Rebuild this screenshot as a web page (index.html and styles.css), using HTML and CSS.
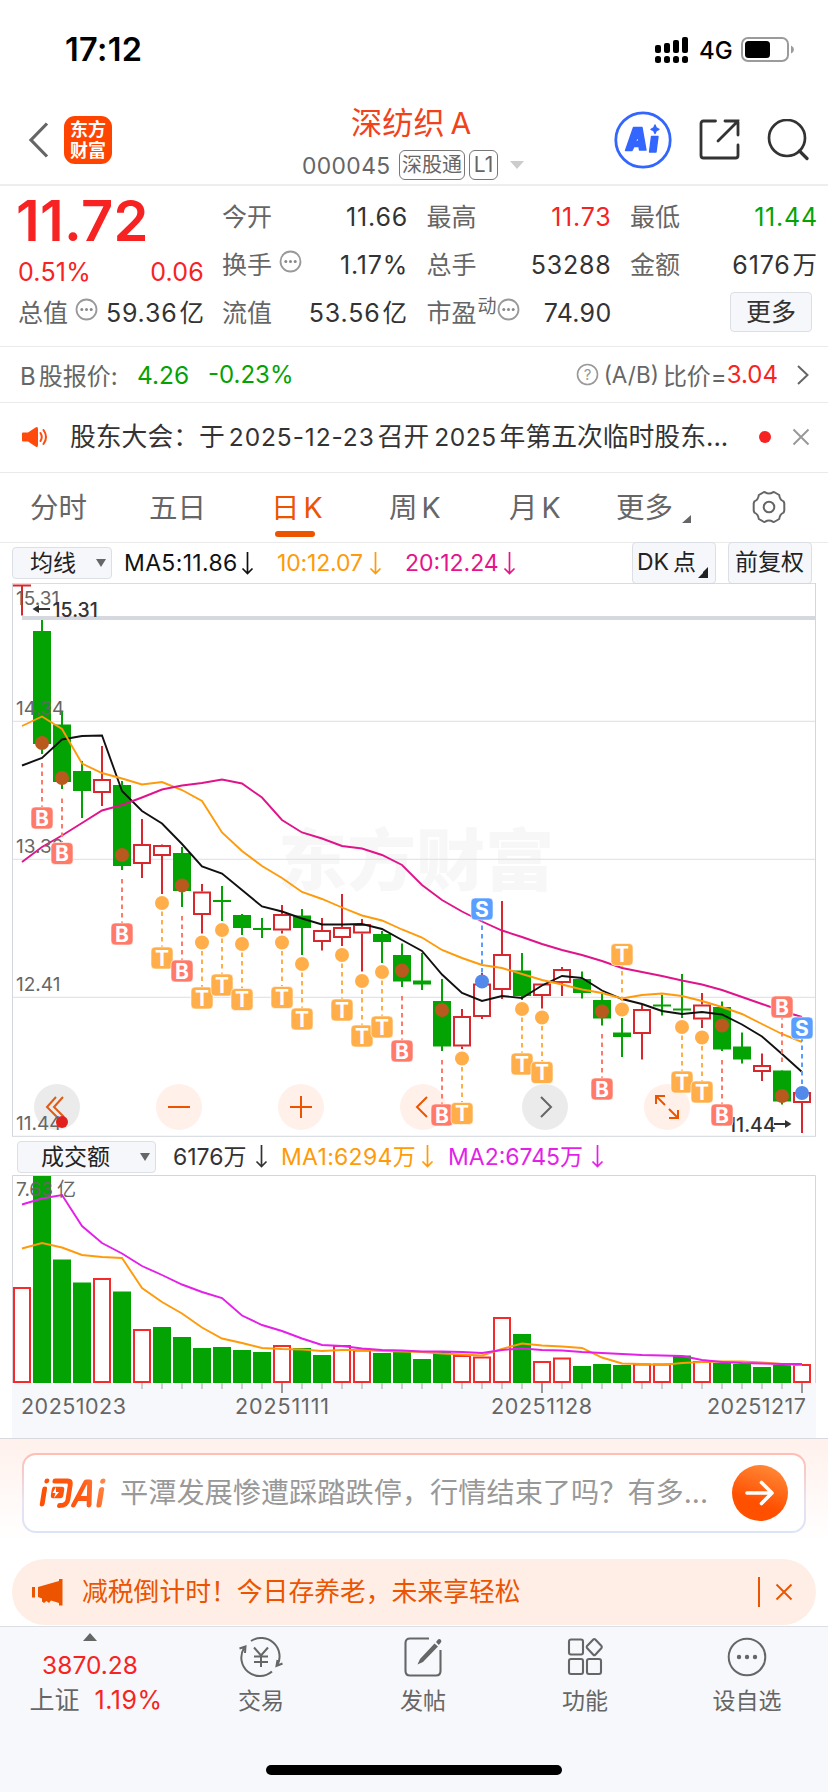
FILE: index.html
```html
<!DOCTYPE html>
<html lang="zh-CN">
<head>
<meta charset="utf-8">
<title>深纺织A 000045</title>
<link rel="stylesheet" href="styles.css">
</head>
<body>
<div class="screen">
  <div class="status">
    <span class="clock">17:12</span>
    <svg class="signal" width="34" height="28" viewBox="0 0 34 28"><g><rect x="0" y="8" width="6" height="8" rx="2"/><rect x="9" y="6" width="6" height="10" rx="2"/><rect x="18" y="3" width="6" height="13" rx="2"/><rect x="27" y="0" width="6" height="16" rx="2"/><rect x="0" y="19" width="6" height="7" rx="2.5"/><rect x="9" y="19" width="6" height="7" rx="2.5"/><rect x="18" y="19" width="6" height="7" rx="2.5"/><rect x="27" y="19" width="6" height="7" rx="2.5"/></g></svg>
    <span class="net">4G</span>
    <svg class="battery" width="54" height="26" viewBox="0 0 54 26"><rect x="1" y="1" width="46" height="23" rx="6" fill="none" stroke="#9b9b9b" stroke-width="2"/><rect x="4" y="4" width="25" height="17" rx="3.5"/><path d="M50 8.500Q53 10 53 12.500T50 16.500Z" fill="#9b9b9b"/></svg>
  </div>

  <header class="header">
    <svg class="back" width="22" height="38" viewBox="0 0 22 38"><path d="M19 2.500L3 19L19 35.500" fill="none" stroke="#666" stroke-width="3.200"/></svg>
    <div class="logo"><span>东方</span><span>财富</span></div>
    <div class="title">
      <div class="name">深纺织<span class="name-a">A</span></div>
      <div class="code"><span class="num">000045</span><span class="tag tag-a">深股通</span><span class="tag tag-b">L1</span><i class="caret"></i></div>
    </div>
    <div class="actions">
      <svg width="58" height="58" viewBox="0 0 58 58"><circle cx="29" cy="29" r="27.200" fill="none" stroke="#36f" stroke-width="2.800"/><g fill="#36f" stroke="#36f" stroke-width="1.400" stroke-linejoin="round"><path fill-rule="evenodd" d="M19.500 16.500H28L32 39H25.500L25 35.500H20L18 39.500H11.500ZM21.500 30.500H24.500L24 24Z"/><path d="M37.500 25.500H44L42 41H35.500Z"/><path d="M41 14L42.300 17L45 18.300L42.300 19.600L41 22.500L39.700 19.600L37 18.300L39.700 17Z"/></g></svg>
      <svg class="share" width="42" height="42" viewBox="0 0 42 42"><path d="M16.500 2H4.500Q2 2 2 4.500V36.500Q2 39 4.500 39H36.500Q39 39 39 36.500V26M26 2H39V16M39 2L19 22" fill="none" stroke="#333" stroke-width="2.800" stroke-linecap="round"/></svg>
      <svg class="search" width="42" height="42" viewBox="0 0 42 42"><circle cx="20" cy="19" r="18" fill="none" stroke="#333" stroke-width="2.700"/><path d="M32.500 32L40 39.500" stroke="#333" stroke-width="3.200" stroke-linecap="round"/></svg>
    </div>
  </header>

  <section class="quote">
    <div class="price">
      <div class="last">11.72</div>
      <div class="cell red chg"><b>0.51%</b><b>0.06</b></div>
      <div class="cell cap"><span class="lbl">总值</span><svg class="more" width="23" height="23" viewBox="0 0 23 23"><use href="#dots"/></svg><b>59.36<em>亿</em></b></div>
    </div>
    <div class="stats">
      <div class="cell"><span class="lbl">今开</span><b>11.66</b></div>
      <div class="cell"><span class="lbl">最高</span><b class="red">11.73</b></div>
      <div class="cell"><span class="lbl">最低</span><b class="green">11.44</b></div>
      <div class="cell"><span class="lbl">换手</span><svg class="more" width="23" height="23" viewBox="0 0 23 23"><g id="dots"><circle cx="11.500" cy="11.500" r="10" fill="none" stroke="#999" stroke-width="1.800"/><g fill="#888"><circle cx="6.800" cy="11.500" r="1.500"/><circle cx="11.500" cy="11.500" r="1.500"/><circle cx="16.200" cy="11.500" r="1.500"/></g></g></svg><b>1.17%</b></div>
      <div class="cell"><span class="lbl">总手</span><b>53288</b></div>
      <div class="cell"><span class="lbl">金额</span><b>6176<em>万</em></b></div>
      <div class="cell"><span class="lbl">流值</span><b>53.56<em>亿</em></b></div>
      <div class="cell"><span class="lbl">市盈</span><span class="sup">动</span><svg class="more tight" width="23" height="23" viewBox="0 0 23 23"><use href="#dots"/></svg><b class="pe">74.90</b></div>
      <div class="cell"><button class="btn-more">更多</button></div>
    </div>
  </section>

  <section class="bshare">
    <span class="lbl">B<em>股报价:</em></span><span class="green b-price">4.26</span><span class="green b-chg">-0.23%</span>
    <span class="ratio"><svg width="23" height="23" viewBox="0 0 23 23"><circle cx="11.500" cy="11.500" r="10" fill="none" stroke="#999" stroke-width="1.600"/><text x="11.500" y="17" font-size="15" text-anchor="middle" fill="#999">?</text></svg><span class="ab">(A/B)</span><em>比价=</em><span class="red">3.04</span><svg class="chev" width="14" height="20" viewBox="0 0 14 20"><path d="M2 1L11.500 10L2 19" fill="none" stroke="#666" stroke-width="2"/></svg></span>
  </section>

  <section class="news">
    <svg class="speaker" width="27" height="22" viewBox="0 0 27 22"><path d="M1 6.500H6L13.500 1.500Q16 0 16 3V19Q16 22 13.500 20.500L6 15.500H1Q0 15.500 0 14.500V7.500Q0 6.500 1 6.500Z" fill="#ff4a0b"/><path d="M18.500 7Q21 11 18.500 15M21.500 4Q26.500 11 21.500 18" fill="none" stroke="#ff4a0b" stroke-width="2" stroke-linecap="round"/></svg>
    <span class="news-text">股东大会：于<span class="n1">2025-12-23</span>召开<span class="n2">2025</span>年第五次临时股东...</span>
    <i class="dot"></i>
    <svg class="x" width="18" height="18" viewBox="0 0 18 18"><path d="M1.500 1.500L16.500 16.500M16.500 1.500L1.500 16.500" stroke="#999" stroke-width="2"/></svg>
  </section>

  <nav class="tabs">
    <span>分时</span><span>五日</span><span class="on">日<i>K</i></span><span>周<i>K</i></span><span>月<i>K</i></span><span class="tab-more">更多<svg width="9" height="8" viewBox="0 0 9 8"><path d="M9 0V8H0Z" fill="#666"/></svg></span>
    <svg class="gear" width="34" height="34" viewBox="0 0 34 34"><path d="M13.200 2.300Q17 4.800 20.800 2.300L22 2L27.200 5Q27.700 9.800 31.600 11.400L32.300 13.400V20.600L31.600 22.600Q27.700 24.200 27.200 29L22 32L20.800 31.700Q17 29.200 13.200 31.700L12 32L6.800 29Q6.300 24.200 2.400 22.600L1.700 20.600V13.400L2.400 11.400Q6.300 9.800 6.800 5L12 2Z" fill="none" stroke="#666" stroke-width="2" stroke-linejoin="round"/><circle cx="17" cy="17" r="5.300" fill="none" stroke="#666" stroke-width="2"/></svg>
  </nav>

  <div class="indbar">
    <span class="select sel-ma">均线<i class="tri"></i></span>
    <span class="ma black m5">MA5:11.86</span><svg class="down black" width="13" height="23"><use href="#arrow"/></svg>
    <span class="ma orange m10">10:12.07</span><svg class="down orange" width="13" height="23"><use href="#arrow"/></svg>
    <span class="ma pink m20">20:12.24</span><svg class="down pink" width="13" height="23"><use href="#arrow"/></svg>
    <span class="flat dk">DK<em>点</em><i class="corner"></i></span><span class="flat fq">前复权</span>
    <svg width="0" height="0"><g id="arrow"><path d="M6.500 0V21.500M1.500 16.500L6.500 21.500L11.500 16.500" fill="none" stroke="currentColor" stroke-width="1.700"/></g></svg>
  </div>
  <svg class="chart" id="kline" width="828" height="555" viewBox="0 583 828 555"></svg>

  <div class="indbar volbar">
    <span class="select sel-vol">成交额<i class="tri"></i></span>
    <span class="ma dark v0">6176万</span><svg class="down dark" width="13" height="23"><use href="#arrow"/></svg>
    <span class="ma orange v1">MA1:6294万</span><svg class="down orange" width="13" height="23"><use href="#arrow"/></svg>
    <span class="ma violet v2">MA2:6745万</span><svg class="down violet" width="13" height="23"><use href="#arrow"/></svg>
  </div>
  <svg class="chart" id="volume" width="828" height="263" viewBox="0 1175 828 263"></svg>

  <section class="ask">
    <div class="ask-box"><div class="ask-in">
      <svg class="ask-logo" width="68" height="32" viewBox="0 0 68 32"><defs><linearGradient id="lg" gradientUnits="userSpaceOnUse" x1="0" y1="32" x2="66" y2="0"><stop offset="0" stop-color="#ff4d00"/><stop offset=".6" stop-color="#ff5a14"/><stop offset="1" stop-color="#ff9355"/></linearGradient></defs><g transform="translate(5 0) skewX(-9)" fill="none" stroke="url(#lg)" stroke-width="4.800" stroke-linecap="round" stroke-linejoin="round"><path d="M2.500 12V27M3.500 4V4.100M11.500 4H24Q27.500 4 27.500 8V23Q27.500 28.500 20 28.500"/><path d="M11 10.500H19.500Q21.500 10.500 21.500 13V18Q21.500 20.500 19.500 20.500H12.500Q10.500 20.500 10.500 18V13Q10.500 10.500 12 10.500Z" fill="url(#lg)" stroke-width="1.500"/><path d="M34 28L42.500 5H46.500L49.500 28M38 21.500H48"/><path d="M59.500 12.500V28M59.500 4V4.100" stroke-width="5.200"/></g><path d="M17 10L13.500 16H16.500L15 21L20 15H17Z" fill="#fff"/></svg>
      <span class="ask-text">平潭发展惨遭踩踏跌停，行情结束了吗？有多...</span>
      <span class="go"><svg width="30" height="26" viewBox="0 0 30 26"><path d="M2 13H27M16.500 2.500L27 13L16.500 23.500" fill="none" stroke="#fff" stroke-width="3.600" stroke-linecap="round" stroke-linejoin="round"/></svg></span>
    </div></div>
  </section>

  <section class="promo">
    <svg width="31" height="27" viewBox="0 0 31 27"><path d="M0 8H3V18.500H0ZM6 8L27 2V0H30.500V26.500H27V24L19 21.500L17 24L14.500 22L12 24L10 22.500V19.500L6 18Z" fill="#ec5400"/></svg>
    <span class="promo-text">减税倒计时！今日存养老，未来享轻松</span>
    <i class="bar"></i>
    <svg class="px" width="18" height="18" viewBox="0 0 18 18"><path d="M1.500 1.500L16.500 16.500M16.500 1.500L1.500 16.500" stroke="#ec5400" stroke-width="1.900"/></svg>
  </section>

  <footer class="dock">
    <div class="index">
      <svg width="14" height="8" viewBox="0 0 14 8"><path d="M7 0L14 8H0Z" fill="#666"/></svg>
      <div class="red idx">3870.28</div>
      <div class="idx2"><span>上证</span><span class="red pct">1.19%</span></div>
    </div>
    <div class="item"><svg width="46" height="42" viewBox="0 0 46 42"><g fill="none" stroke="#666" stroke-width="2"><path d="M13 5A18.500 18.500 0 0 1 39.500 29M34 35.500A18.500 18.500 0 0 1 6 12M1.500 12.500L7.500 10.500L7 17M44.500 27.500L38.500 30L39.500 24M16 11.500L23 19.500L30 11.500M23 19.500V31M16 20.500H30M16 26H30"/></g></svg><span>交易</span></div>
    <div class="item"><svg width="46" height="42" viewBox="0 0 46 42"><path d="M29 2.500H10Q5.500 2.500 5.500 7V35Q5.500 39.500 10 39.500H36Q40.500 39.500 40.500 35V14" fill="none" stroke="#666" stroke-width="2.100"/><path d="M34.500 7.500L38 10.500L23 26L17.500 28.500L20 23ZM36 6L38 3.500Q39.500 2.500 41 4Q42 5.500 40.500 7L38.800 9Z" fill="#666"/></svg><span>发帖</span></div>
    <div class="item"><svg width="46" height="42" viewBox="0 0 46 42"><g fill="none" stroke="#666" stroke-width="2.100" stroke-linejoin="round"><rect x="7" y="3.500" width="14" height="15" rx="2"/><rect x="7" y="23" width="14" height="15" rx="2"/><rect x="25" y="23" width="14" height="15" rx="2"/><path d="M31.300 3.500Q32.300 2.500 33.300 3.500L39.500 10Q40.200 11 39.500 12L33.300 18.700Q32.300 19.700 31.300 18.700L25 12Q24.300 11 25 10Z"/></g></svg><span>功能</span></div>
    <div class="item"><svg width="46" height="42" viewBox="0 0 46 42"><circle cx="23" cy="21" r="18.300" fill="none" stroke="#666" stroke-width="2"/><g fill="#666"><circle cx="15" cy="21" r="2.200"/><circle cx="23" cy="21" r="2.200"/><circle cx="31" cy="21" r="2.200"/></g></svg><span>设自选</span></div>
  </footer>
  <div class="home"><i></i></div>
</div>
<script src="chart.js"></script>
</body>
</html>
```

FILE: styles.css
```css
* { box-sizing: border-box; }
body { margin: 0; background: #fff; font-family: Inter, "Noto Sans CJK SC", sans-serif; color: #333; }
i, em { font-style: normal; }
b { font-weight: 400; }
svg { display: block; flex: none; }
.screen { width: 828px; height: 1792px; overflow: hidden; display: flex; flex-direction: column; }
.screen > * { flex: none; }
.red { color: #f72323; }
.green { color: #04a304; }
.black { color: #111; }
.dark { color: #333; }
.orange { color: #ff9a0a; }
.pink { color: #e4148a; }
.violet { color: #e31fe8; }

.status { height: 89px; display: flex; align-items: flex-start; color: #000; padding-left: 65px; }
.clock { width: 590px; margin-top: 30px; font-size: 32.500px; line-height: 40px; font-weight: 600; letter-spacing: 0.300px; }
.signal { margin-top: 37px; }
.net { width: 52px; padding-left: 10px; margin-top: 36px; font-size: 24px; line-height: 30px; font-weight: 500; }
.battery { margin-top: 37px; }

.header { height: 97px; border-bottom: 2px solid #eee; display: flex; align-items: flex-start; padding-left: 28px; }
.back { margin-top: 32px; }
.logo { width: 48px; height: 48px; margin: 27px 0 0 14px; border-radius: 11px; background: #ff4400; color: #fff; font-size: 18px; font-weight: 700; display: flex; flex-direction: column; align-items: center; justify-content: center; }
.logo span { line-height: 21px; }
.title { width: 240px; margin-left: 178px; margin-top: 11px; }
.name { height: 46px; padding-left: 61px; font-size: 31.200px; line-height: 46px; color: #f2421b; white-space: nowrap; }
.name-a { margin-left: 6px; font-size: 30px; }
.code { display: flex; align-items: center; height: 36px; margin-top: 1px; padding-left: 12px; color: #666; font-size: 22.800px; }
.num { width: 97px; letter-spacing: 0.400px; }
.tag { height: 30px; border: 1.500px solid #777; border-radius: 6px; font-size: 20px; line-height: 28px; text-align: center; white-space: nowrap; }
.tag-a { width: 66px; }
.tag-b { width: 29px; margin-left: 4px; font-size: 21px; }
.caret { margin-left: 12px; border: 7.500px solid transparent; border-top: 8px solid #ccc; border-bottom: 0; }
.actions { display: flex; margin: 22px 0 0 84px; }
.share { margin: 8px 0 0 27px; }
.search { margin: 8px 0 0 26px; }

.quote { height: 160px; display: flex; padding: 7px 0 0 18px; }
.price { width: 186px; }
.last { height: 63px; padding-top: 1px; font-size: 56px; line-height: 54px; font-weight: 600; color: #f72323; letter-spacing: 0.300px; margin-left: -2px; }
.cell { height: 48px; display: flex; align-items: center; font-size: 25px; line-height: 48px; white-space: nowrap; }
.cell b { margin-left: auto; letter-spacing: 0.800px; margin-right: -1px; }
.cell b.pe { letter-spacing: 0.300px; }
.cell em { margin-left: 2px; letter-spacing: 0; font-size: 24.500px; margin-right: 1px; }
.lbl { color: #666; }
.price .chg { height: 32px; }
.price .chg b { letter-spacing: 0.200px; margin-right: 0; }
.price .chg b:first-child { margin-left: 0; }
.price .cap { margin-top: 1px; }
.more { margin: -8px 0 0 7px; }
.more.tight { margin-left: 0; }
.sup { color: #666; font-size: 19px; line-height: 20px; margin: -12px 0 0 1px; }
.stats { display: grid; grid-template-columns: 185px 184px 187px; column-gap: 19.500px; grid-auto-rows: 48px; margin-left: 18px; }
.btn-more { width: 82px; height: 40px; margin: -2px 5px 0 auto; padding: 0; border: 1.500px solid #dcdfe5; border-radius: 4px; background: #f6f7fb; font: 25px/36px Inter, "Noto Sans CJK SC", sans-serif; color: #333; }

.bshare { height: 57px; border-top: 1.500px solid #eaeaea; border-bottom: 1.500px solid #eaeaea; display: flex; align-items: center; padding-left: 20px; font-size: 24px; }
.bshare .lbl { width: 117px; }
.bshare .lbl em { margin-left: 3px; font-size: 24px; }
.b-price { width: 71px; font-size: 24.500px; }
.b-chg { font-size: 24px; }
.ratio { margin-left: auto; margin-right: 18px; display: flex; align-items: center; color: #666; }
.ab { margin: 0 4px 0 5px; font-size: 22.500px; }
.chev { margin-left: 18px; }

.news { height: 70px; border-bottom: 1.500px solid #eaeaea; display: flex; align-items: center; padding-left: 22px; padding-bottom: 2px; }
.news-text { width: 706px; padding-left: 21px; font-size: 25.800px; line-height: 40px; white-space: nowrap; }
.n1 { margin: 0 3px 0 4px; font-size: 24.500px; letter-spacing: 0.900px; }
.n2 { margin: 0 3px 0 5px; font-size: 24.500px; letter-spacing: 0.500px; }
.dot { width: 12px; height: 12px; border-radius: 50%; background: #f72323; margin-left: 4px; }
.x { margin-left: 21px; }

.tabs { height: 70px; border-bottom: 1.500px solid #eaeaea; display: flex; padding-left: 30px; font-size: 28.500px; line-height: 70px; color: #666; }
.tabs span { width: 119px; height: 70px; white-space: nowrap; }
.tabs i { margin-left: 4px; }
.tabs .on { position: relative; color: #ec5400; }
.tabs .on::after { content: ""; position: absolute; left: 4px; top: 58px; width: 40px; height: 6px; border-radius: 3px; background: #ec5400; }
.tabs span:nth-child(3) { margin-left: 3px; width: 118px; }
.tabs span:nth-child(4) { width: 120px; }
.tabs span:nth-child(5) { width: 107px; }
.tabs .tab-more { width: 136px; display: flex; }
.tab-more svg { margin: 42px 0 0 9px; }
.gear { margin-top: 17px; }

.indbar { height: 40px; display: flex; align-items: center; font-size: 23px; line-height: 32px; padding-left: 12px; white-space: nowrap; }
.select { height: 32px; display: flex; align-items: center; border: 1.500px solid #dcdfe5; border-radius: 4px; background: #f6f7fb; color: #222; }
.sel-ma { width: 100px; padding-left: 17px; }
.sel-vol { width: 139px; padding-left: 23px; }
.tri { margin-left: auto; margin-right: 5px; border: 5px solid transparent; border-top: 8px solid #666; border-bottom: 0; }
.m5 { margin-left: 12px; width: 117px; letter-spacing: 0.350px; }
.m10 { margin-left: 23px; width: 92px; letter-spacing: -0.150px; }
.m20 { margin-left: 23px; width: 98px; }
.flat { height: 42px; border: 1.500px solid #dcdfe5; border-radius: 4px; background: #f6f7fb; color: #222; line-height: 38px; font-size: 23px; }
.dk { width: 84px; padding-left: 4px; margin-left: 116px; display: flex; }
.dk em { margin-left: 4px; }
.corner { border: 5.500px solid #222; border-left-color: transparent; border-top-color: transparent; margin: 24px 0 0 2px; height: 11px; }
.fq { width: 84px; margin-left: 12px; padding-left: 6px; }
.volbar { height: 37px; padding-left: 17px; }
.v0 { width: 82px; margin-left: 17px; }
.v1 { width: 140px; margin-left: 13px; letter-spacing: 0.300px; }
.v2 { width: 143px; margin-left: 14px; }

.chart text { font-family: Inter, "Noto Sans CJK SC", sans-serif; }
.chart .axis { font-size: 19px; fill: #666; }
.chart .peak { font-size: 19.500px; font-weight: 500; fill: #333; }
.chart .mark { font-size: 21px; font-weight: 700; fill: #fff; text-anchor: middle; }
.chart .water { font-size: 67px; font-weight: 800; fill: #f7f7f7; }
.chart .date { font-size: 21.500px; fill: #666; }

.ask { height: 121px; border-top: 1.500px solid #d8d9df; background: linear-gradient(#fff1ec, #fff 85%); padding: 13.500px 22px 0; }
.ask-box { height: 80px; border-radius: 14px; padding: 2px; background: linear-gradient(#ffbdb3, #e8e2ef 60%, #dbe4f6); }
.ask-in { height: 76px; border-radius: 12px; background: #fff; display: flex; align-items: center; }
.ask-logo { margin-left: 15px; }
.ask-text { margin-left: 13px; width: 612px; color: #999; font-size: 28.200px; line-height: 40px; white-space: nowrap; }
.go { width: 56px; height: 56px; border-radius: 50%; background: linear-gradient(200deg, #ff9140, #ff5000 65%); display: flex; align-items: center; justify-content: center; }

.promo { height: 66px; margin: 0 12px; border-radius: 33px; background: #feeee6; display: flex; align-items: center; padding-left: 20px; color: #ec5400; }
.promo-text { width: 695px; padding-left: 19px; font-size: 25.800px; line-height: 40px; }
.bar { width: 1.500px; height: 30px; background: #ec5400; }
.px { margin-left: 15px; }

.dock { height: 125px; margin-top: 1px; border-top: 1.500px solid #dcdfe3; background: #f7f8fb; display: flex; color: #666; }
.index { width: 180px; padding-top: 6px; display: flex; flex-direction: column; align-items: center; font-size: 24.500px; line-height: 34px; }
.idx { margin-top: 7px; }
.idx2 { display: flex; gap: 15px; margin-top: 1px; padding-left: 12px; font-size: 25px; }
.pct { letter-spacing: 0.500px; }
.item { width: 162px; padding-top: 9px; display: flex; flex-direction: column; align-items: center; font-size: 23px; }
.item span { margin-top: 6px; line-height: 34px; }
.home { flex: 1 1 auto !important; background: #f7f8fb; display: flex; justify-content: center; align-items: flex-start; }
.home i { width: 296px; height: 10px; margin-top: 14px; border-radius: 5px; background: #000; }
```

FILE: chart.js
```js
const X0 = 22, STEP = 20, HALF = 9;
const RED = '#d8282d', GREEN = '#04a304';
const xAt = i => X0 + i * STEP;

// direction, high, body top, body bottom, low
const candles = [
  ['r', 585.5, 584.5, 586.5, 615.5], ['g', 620, 631, 744, 754], ['g', 712, 724.5, 782, 789], ['g', 761, 771, 791, 818],
  ['r', 746, 779, 793, 806], ['g', 781, 785, 866, 870], ['r', 819, 844, 864, 878], ['r', 844.5, 845, 856, 894],
  ['g', 847, 853, 891, 907], ['r', 884, 891.5, 915, 933.5], ['g', 886, 900, 902, 921], ['g', 914, 915, 928, 935],
  ['g', 918, 928, 930, 938], ['r', 905, 914, 930.5, 933.5], ['g', 909, 915.5, 928, 955], ['r', 918, 930, 942, 950.5],
  ['r', 894, 927, 938, 946], ['r', 919, 924, 933.5, 971.5], ['g', 931, 934, 942, 963], ['g', 943.5, 955, 981.5, 987],
  ['g', 953, 980.5, 984.5, 990], ['g', 979, 1001, 1046.5, 1051], ['r', 1009, 1016, 1046.5, 1049], ['r', 973, 983.5, 1017, 1019],
  ['r', 901, 954, 990, 999], ['g', 953, 970.5, 996, 1000], ['r', 983.5, 983.5, 996, 1008.5], ['r', 967, 969, 983, 996],
  ['g', 971.5, 979, 993, 998.5], ['g', 994, 1000, 1018.5, 1025.5], ['g', 1018, 1032.5, 1037, 1057], ['r', 1005, 1009, 1034, 1059.5],
  ['g', 995, 1004.5, 1006.5, 1015.5], ['g', 974, 1008.5, 1010.5, 1018], ['r', 993, 1004.5, 1019.5, 1028], ['g', 1001.5, 1007, 1049.5, 1051],
  ['g', 1032.5, 1046.5, 1059.5, 1063.5], ['r', 1053.5, 1065, 1072, 1081], ['g', 1070.5, 1070.5, 1101.5, 1104.5], ['r', 1090, 1092, 1103, 1133]
];

const ma5 = [765.5, 758, 739.5, 736, 735.5, 791, 811, 823.5, 844, 866.5, 873.5, 890, 906.5, 911.5, 918.5, 924.5, 924.5, 924, 929, 940, 951, 974.5, 993, 1001, 996, 998, 985.5, 976, 978, 990.5, 999, 1004, 1011, 1014, 1012, 1014.5, 1024.5, 1036.5, 1054, 1072];
const ma10 = [726, 716.5, 729, 763.5, 773, 778.5, 784.5, 782, 790, 801, 832.5, 851, 866, 878, 892, 899, 907.5, 915.5, 920.5, 929.5, 937.5, 950, 958, 965, 968, 974, 980, 984.5, 989.5, 993, 998.5, 995, 993.5, 996, 1001, 1007, 1014, 1024, 1034, 1042];
const ma20 = [862, 847, 835.5, 823, 810.5, 805, 797.5, 789.5, 785.5, 783, 779.5, 783.5, 797.5, 820, 832.5, 838.5, 846, 848.5, 855, 865, 885, 900, 911.5, 921.5, 930.5, 937, 944, 950, 955, 961, 968, 972, 976, 980.5, 984.5, 990, 997, 1004, 1011, 1017];

// kind, candle index, dot y, label centre y
const marks = [
  ['B', 1, 743, 818], ['B', 2, 778, 853.5], ['B', 5, 855, 934], ['T', 7, 903, 958], ['B', 8, 885.5, 971],
  ['T', 9, 942.5, 998], ['T', 10, 930, 985], ['T', 11, 944, 999.5], ['T', 13, 942.5, 997.5], ['T', 14, 964, 1019],
  ['T', 16, 955, 1010], ['T', 17, 981, 1036], ['T', 18, 972, 1027], ['B', 19, 970.5, 1051], ['B', 21, 1010, 1115],
  ['T', 22, 1058.5, 1113.5], ['S', 23, 981.5, 909], ['T', 25, 1009, 1064], ['T', 26, 1017.5, 1072.5], ['B', 29, 1011.5, 1089],
  ['T', 30, 1009.5, 954.5], ['T', 33, 1027, 1082], ['T', 34, 1037.5, 1092], ['B', 35, 1025.5, 1115], ['B', 38, 1096, 1007], ['S', 39, 1093, 1028]
];
const MARK = { B: '#ff7a69', T: '#ffae4a', S: '#5a9fff' };
const DOT = { B: '#b85a1e', T: '#ffae4a', S: '#5289ea' };

const volumes = [1287, 1176, 1259.5, 1282.5, 1278, 1291.5, 1329, 1327, 1337, 1348, 1347, 1350, 1352, 1345, 1348, 1355, 1345, 1349.5, 1353, 1352, 1359, 1351, 1355, 1356.5, 1317, 1334, 1361, 1357.5, 1366, 1364, 1365, 1363.5, 1363.5, 1355.5, 1361, 1363, 1364, 1367, 1365, 1364];
const volDir = 'rgggrgrggggggrggrrggggrrrgrrgggrrgrggggr';
const vma1 = [1248.5, 1243, 1247.5, 1255, 1257, 1258, 1288, 1302, 1313.5, 1327.5, 1338.5, 1343, 1348, 1349, 1349.5, 1351, 1350, 1350, 1351, 1351.5, 1352, 1353.5, 1354.5, 1355.5, 1349, 1343.5, 1345.5, 1346.5, 1348, 1357.5, 1363.5, 1364, 1365, 1363, 1362, 1361.5, 1361.5, 1362.5, 1364, 1365];
const vma2 = [1204.5, 1198.5, 1195, 1226, 1243, 1253.5, 1266, 1275, 1284.5, 1292, 1298, 1315.5, 1325, 1331, 1338.5, 1345, 1346, 1348.5, 1350, 1350.5, 1351.5, 1351.5, 1352, 1353, 1350, 1348.5, 1350, 1350.5, 1352, 1353, 1354, 1355, 1355.5, 1356, 1360, 1362, 1363, 1363.5, 1364, 1364];

const line = (x1, y1, x2, y2, c, w = 2, extra = '') =>
  `<line x1="${x1}" y1="${y1}" x2="${x2}" y2="${y2}" stroke="${c}" stroke-width="${w}" ${extra}/>`;
const rect = (x, y, w, h, fill, extra = '') =>
  `<rect x="${x}" y="${y}" width="${w}" height="${h}" fill="${fill}" ${extra}/>`;
const text = (x, y, s, cls, extra = '') => `<text x="${x}" y="${y}" class="${cls}" ${extra}>${s}</text>`;
const curve = (ys, c) =>
  `<polyline points="${ys.map((y, i) => xAt(i) + ',' + y).join(' ')}" fill="none" stroke="${c}" stroke-width="1.9"/>`;

function drawKline() {
  let s = text(278, 885, '东方财富', 'water', 'textLength="276" lengthAdjust="spacingAndGlyphs"');
  for (const y of [721.3, 859.3, 997.3]) s += line(13, y, 815, y, '#e2e4ee', 1.2);
  s += line(22, 618, 815, 618, '#d5d9df', 4);
  s += `<rect x="12.5" y="582.8" width="803" height="553.5" fill="none" stroke="#d3d6dc"/>` + line(12, 583.3, 816, 583.3, '#d3d6dc', 1);

  const btns = [
    [57, '#ebebeb', '<path d="M-1 -10L-10 0L0 10M6 -10L-3 0L7 10"/>', '#e05a14'], [179, '#fff0e9', '<path d="M-11 0H11"/>', '#ec5400'],
    [301, '#fff0e9', '<path d="M-11 0H11M0 -11V11"/>', '#ec5400'], [423, '#fff0e9', '<path d="M4 -10L-6 0L4 10"/>', '#ec5400'],
    [545, '#ebebeb', '<path d="M-4 -10L6 0L-4 10"/>', '#666'],
    [667, '#fff0e9', '<path d="M-11 -3V-11H-2M-10 -10L-2 -2M11 3V11H2M10 10L2 2"/>', '#ec5400']
  ];
  for (const [x, bg, icon, c] of btns)
    s += `<g transform="translate(${x} 1107)"><circle r="23" fill="${bg}"/><g fill="none" stroke="${c}" stroke-width="2">${icon}</g></g>`;

  candles.forEach(([d, hi, top, bot, lo], i) => {
    const x = xAt(i), h = bot - top;
    if (d === 'g' || h < 3) {
      s += line(x, hi, x, lo, d === 'g' ? GREEN : RED) + rect(x - HALF, top, 18, h, d === 'g' ? GREEN : RED);
    } else {
      s += line(x, hi, x, top, RED) + line(x, bot, x, lo, RED);
      s += rect(x - HALF + 1, top + 1, 16, h - 2, '#fff', `stroke="${RED}" stroke-width="2"`);
    }
  });
  s += curve(ma5, '#111') + curve(ma10, '#ff9a0a') + curve(ma20, '#e0148a');

  [['15.31', 605], ['14.34', 715], ['13.38', 853], ['12.41', 991], ['11.44', 1129.7]].forEach(([t, y]) => { s += text(16, y, t, 'axis'); });
  s += text(52.5, 617, '15.31', 'peak') + line(36, 609, 50, 609, '#333') + '<path d="M32.500 609L39 605V613Z" fill="#333"/>';
  s += text(728, 1131.7, '11.44', 'peak') + line(774, 1124, 788, 1124, '#333') + '<path d="M791.500 1124L785 1120V1128Z" fill="#333"/>';
  s += '<circle cx="62" cy="1122" r="6" fill="#e2211f"/>';

  for (const [k, i, dy, cy] of marks) {
    const x = xAt(i), dir = cy > dy ? 1 : -1;
    s += `<circle cx="${x}" cy="${dy}" r="7" fill="${DOT[k]}"/>`;
    const start = k === 'T' ? dy : cy - dir * 55;
    s += line(x, k === 'S' ? dy - 9 : start, x, cy + (-dir) * 11, MARK[k], 2, 'stroke-dasharray="4.5 4"');
    s += rect(x - 11, cy - 11, 22, 22, MARK[k], 'rx="4" stroke="#fff" stroke-width=".6"') + text(x, cy + 7.5, k, 'mark');
  }
  document.getElementById('kline').innerHTML = s;
}

function drawVolume() {
  let s = rect(12, 1383, 804, 55, '#f7f8fb');
  s += '<path d="M12.500 1383V1175.500H815.500V1383" fill="none" stroke="#d3d6dc"/>';
  volumes.forEach((y, i) => {
    const x = xAt(i);
    s += volDir[i] === 'g' ? rect(x - HALF, y, 18, 1383 - y, GREEN)
      : rect(x - HALF + 1, y + 1, 16, 1381 - y, '#fff', 'stroke="#f52a2a" stroke-width="2"');
    if (i > 5) s += i % 13 === 0 ? line(x, 1383, x, 1393, '#999') : line(x, 1383, x, 1389, '#ccc');
  });
  s += curve(vma1, '#ff9a0a') + curve(vma2, '#e31fe8');
  s += text(16, 1196, '7.63<tspan dx="4">亿</tspan>', 'axis');
  [[21, '20251023', 105], [235, '20251111', 94], [491, '20251128', 101], [707, '20251217', 99]].forEach(([x, t, w]) => {
    s += text(x, 1414, t, 'date', `textLength="${w}"`);
  });
  document.getElementById('volume').innerHTML = s;
}

drawKline();
drawVolume();
```
